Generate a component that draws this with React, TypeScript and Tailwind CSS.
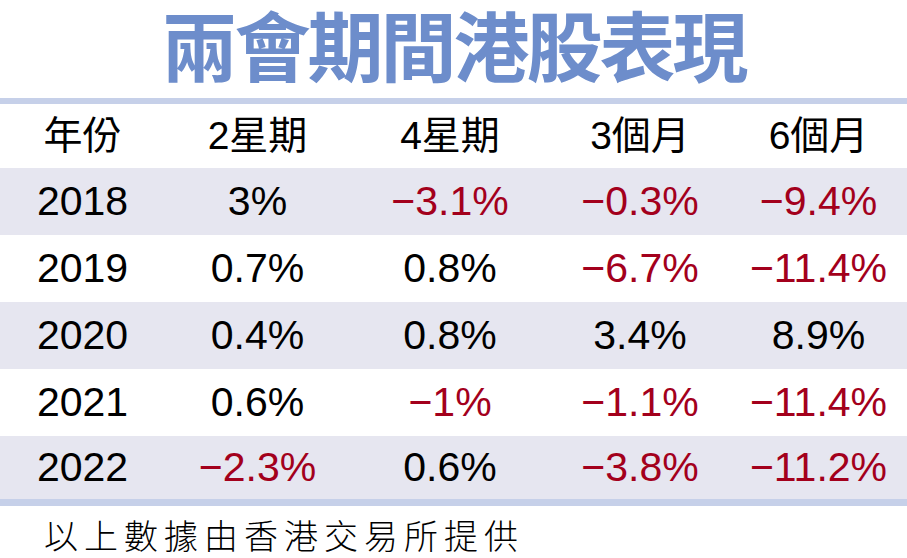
import React from 'react'

const rows = [
  { year: '2018', cells: ['3%', '−3.1%', '−0.3%', '−9.4%'] },
  { year: '2019', cells: ['0.7%', '0.8%', '−6.7%', '−11.4%'] },
  { year: '2020', cells: ['0.4%', '0.8%', '3.4%', '8.9%'] },
  { year: '2021', cells: ['0.6%', '−1%', '−1.1%', '−11.4%'] },
  { year: '2022', cells: ['−2.3%', '0.6%', '−3.8%', '−11.2%'] },
]

const headers = ['年份', '2星期', '4星期', '3個月', '6個月']

const App = () => {
  return (
    <div className="w-[907px] h-[558px] bg-white overflow-hidden">
      {/* Title */}
      <div className="h-[98px] flex justify-center items-start">
        <h1
          className="text-[76px] leading-[86px] font-bold tracking-[-3px] text-[#6d8dcb]"
          style={{ fontFamily: '"Noto Sans CJK TC", "Noto Sans CJK SC", serif' }}
        >
          兩會期間港股表現
        </h1>
      </div>

      <div className="h-[6px] bg-[#c6d0e9]" />

      {/* Table */}
      <div style={{ fontFamily: '"Liberation Sans", "Noto Sans CJK TC", sans-serif' }}>
        <div className="grid grid-cols-[165px_185px_200px_180px_177px] h-[64px] items-center text-[39px] text-black">
          {headers.map((h) => (
            <div key={h} className="text-center">{h}</div>
          ))}
        </div>

        {rows.map((r, i) => (
          <div
            key={r.year}
            className={`grid grid-cols-[165px_185px_200px_180px_177px] items-center text-[41px] ${
              i % 2 === 0 ? 'bg-[#e6e6f0]' : 'bg-white'
            } ${i === rows.length - 1 ? 'h-[63px]' : 'h-[67px]'}`}
          >
            <div className="text-center text-black">{r.year}</div>
            {r.cells.map((c, j) => (
              <div
                key={j}
                className={`text-center ${c.startsWith('−') ? 'text-[#a3001c]' : 'text-black'}`}
              >
                {c}
              </div>
            ))}
          </div>
        ))}
      </div>

      <div className="h-[7px] bg-[#c6d0e9]" />

      {/* Source */}
      <div
        className="pl-[44px] pt-[10px] text-[34px] leading-[38px] tracking-[6px] font-light text-black"
        style={{ fontFamily: '"Noto Sans CJK TC", sans-serif' }}
      >
        以上數據由香港交易所提供
      </div>
    </div>
  )
}

export default App
